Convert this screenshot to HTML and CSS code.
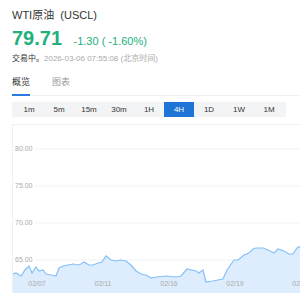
FILE: index.html
```html
<!DOCTYPE html>
<html lang="zh-CN">
<head>
  <meta charset="UTF-8" />
  <title>WTI原油</title>
  <link rel="stylesheet" href="styles.css">
</head>
<body>

  <!-- Quote header -->
  <div class="quote">
    <h1 class="title">WTI原油 &nbsp;(USCL)</h1>
    <div class="price-row">
      <span class="price">79.71</span>
      <span class="change">-1.30 ( -1.60%)</span>
    </div>
    <p class="status"><span class="state">交易中。</span>2026-03-06 07:55:08 (北京时间)</p>
  </div>

  <!-- Tabs -->
  <div class="tabs">
    <a href="#" class="tab current">概览</a>
    <a href="#" class="tab">图表</a>
  </div>

  <!-- Period selector -->
  <div class="periods">
    <span class="period">1m</span>
    <span class="period">5m</span>
    <span class="period">15m</span>
    <span class="period">30m</span>
    <span class="period">1H</span>
    <span class="period selected">4H</span>
    <span class="period">1D</span>
    <span class="period">1W</span>
    <span class="period">1M</span>
  </div>

  <!-- Chart -->
  <div class="chart">
    <svg width="300" height="168" viewBox="0 0 300 168">
      <g class="grid">
        <line x1="22" y1="24" x2="300" y2="24"/>
        <line x1="22" y1="61" x2="300" y2="61"/>
        <line x1="22" y1="98" x2="300" y2="98"/>
        <line x1="22" y1="135" x2="300" y2="135"/>
      </g>
      <g class="y-labels">
        <text x="2" y="26">80.00</text>
        <text x="2" y="63">75.00</text>
        <text x="2" y="100">70.00</text>
        <text x="2" y="137">65.00</text>
      </g>
      <polygon class="area" points="0,149 3,148 8,151 12,145 16,141 19,148 23,142 26,146 30,145 33,149 38,150 43,151 46,143 50,141 55,140 60,139 65,140 68,139 71,137 76,140 80,140 85,138 89,137 93,131 98,135 103,136 108,135 113,136 118,140 123,146 128,149 133,150 138,153 143,152 153,151 163,152 168,151 174,144 183,146 186,148 190,145 193,157 200,156 205,155 210,154 214,145 221,135 225,135 231,130 236,128 240,124 243,123 246,123 250,123 255,125 261,128 265,124 271,126 276,129 280,129 284,123 288,121 300,119 300,168 0,168"/>
      <polyline class="line" points="0,149 3,148 8,151 12,145 16,141 19,148 23,142 26,146 30,145 33,149 38,150 43,151 46,143 50,141 55,140 60,139 65,140 68,139 71,137 76,140 80,140 85,138 89,137 93,131 98,135 103,136 108,135 113,136 118,140 123,146 128,149 133,150 138,153 143,152 153,151 163,152 168,151 174,144 183,146 186,148 190,145 193,157 200,156 205,155 210,154 214,145 221,135 225,135 231,130 236,128 240,124 243,123 246,123 250,123 255,125 261,128 265,124 271,126 276,129 280,129 284,123 288,121 300,119"/>
      <g class="x-labels">
        <text x="24" y="161">02/07</text>
        <text x="90" y="161">02/11</text>
        <text x="156" y="161">02/16</text>
        <text x="222" y="161">02/19</text>
        <text x="288" y="161">02/23</text>
      </g>
    </svg>
  </div>

  <div class="stats">
    <span class="stat">今开</span>
    <span class="stat">最高</span>
  </div>

</body>
</html>
```

FILE: styles.css
```css
body {
  font-family: "Liberation Sans", "Noto Sans CJK SC", sans-serif;
  background-color: #fff;
  color: #333;
  margin: 0;
  padding: 0 0 0 12px;
  overflow: hidden;
}

.title {
  margin: 6px 0 0;
  font-size: 11px;
  font-weight: normal;
  line-height: 18px;
  color: #333;
}

.price-row {
  margin-top: 2px;
  line-height: 24px;
  color: #22b07d;
}

.price {
  font-size: 20px;
  font-weight: bold;
}

.change {
  font-size: 11px;
  margin-left: 7px;
}

.status {
  margin: 0;
  font-size: 8px;
  line-height: 12px;
  color: #aaa;
}

.state {
  color: #333;
}

.tabs {
  display: flex;
  gap: 22px;
  margin-top: 8px;
  border-bottom: 1px solid #f0f0f0;
}

.tab {
  font-size: 9px;
  line-height: 18px;
  padding-bottom: 3px;
  border-bottom: 2px solid transparent;
  margin-bottom: -1px;
  color: #999;
  text-decoration: none;
}

.tab.current {
  color: #333;
  border-bottom-color: #2a7ae2;
}

.periods {
  display: flex;
  width: 270px;
  margin-top: 6px;
  padding: 0 2px;
  background-color: #f3f4f6;
}

.period {
  width: 30px;
  font-size: 8px;
  line-height: 15px;
  text-align: center;
  color: #333;
}

.period.selected {
  background-color: #1f74d8;
  color: #fff;
}

.chart {
  margin-top: 7px;
  border-top: 1px solid #f0f0f0;
  border-left: 1px solid #f0f0f0;
  height: 168px;
}

.chart svg {
  display: block;
}

.grid line {
  stroke: #f2f2f2;
  stroke-width: 1;
}

.y-labels text,
.x-labels text {
  font-size: 7px;
  fill: #aaa;
}

.x-labels text {
  text-anchor: middle;
}

.area {
  fill: #deedfd;
}

.line {
  fill: none;
  stroke: #86c0f8;
  stroke-width: 1.2;
}

.stats {
  display: flex;
  gap: 150px;
  padding-left: 3px;
  margin-top: 6px;
  font-size: 9px;
  line-height: 14px;
  color: #333;
}
```
